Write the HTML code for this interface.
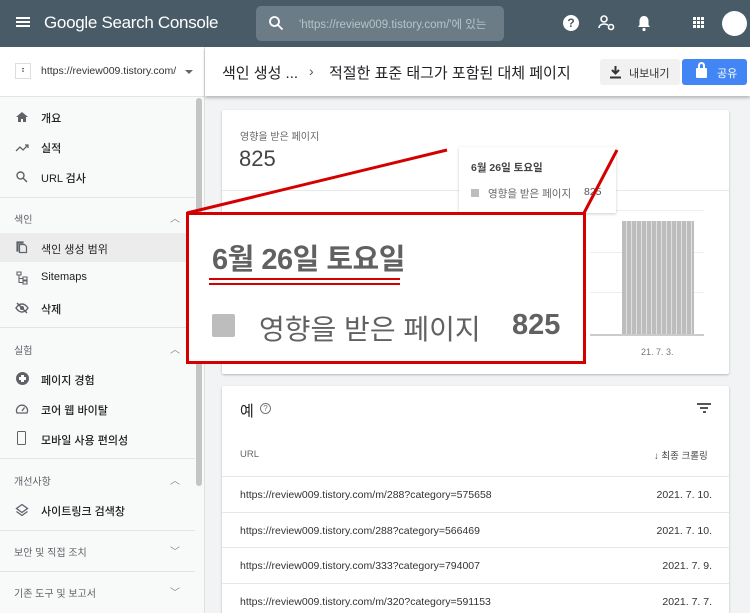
<!DOCTYPE html>
<html style="width:750px;height:613px;overflow:hidden"><head><meta charset="utf-8"><style>
*{margin:0;padding:0;box-sizing:border-box}
body{width:750px;height:613px;overflow:hidden;position:relative;background:#f1f3f4;font-family:"Liberation Sans","Noto Sans CJK KR",sans-serif;color:#202124}
.abs{position:absolute}
.top{left:0;top:0;width:750px;height:47px;background:#485b67}
.side{left:0;top:47px;width:205px;height:566px;background:#f8f9f9;border-right:1px solid #e0e0e0}
.item{position:absolute;left:41px;font-size:11px;color:#202124;font-weight:500}
.sec{position:absolute;left:14px;font-size:10px;color:#5f6368}
.chev{position:absolute;left:170px;font-size:10px;color:#888}
.div{position:absolute;left:0;width:195px;height:1px;background:#e3e3e3}
.ic{position:absolute;left:15px;width:14px;height:14px}
.card{background:#fff;box-shadow:0 1px 2px rgba(0,0,0,.25);border-radius:2px}
.row{position:absolute;left:0;width:507px;height:36px;border-top:1px solid #e6e6e6;font-size:10.5px;color:#333;white-space:nowrap}
.row span{position:absolute;top:12px}
.row span.d{right:17px}
</style></head><body>
<div class="abs top">
 <div class="abs" style="left:16px;top:17px;width:14px;height:2px;background:#fff;box-shadow:0 4px 0 #fff,0 8px 0 #fff"></div>
 <div class="abs" style="left:44px;top:13px;font-size:17px;color:#fff;letter-spacing:-0.3px">Google Search Console</div>
 <div class="abs" style="left:256px;top:6px;width:248px;height:35px;background:#6b7c86;border-radius:5px"></div>
 <svg class="abs" style="left:268px;top:15px" width="16" height="16" viewBox="0 0 16 16"><circle cx="6.5" cy="6.5" r="4.5" stroke="#fff" stroke-width="1.8" fill="none"/><path d="M10 10l4.5 4.5" stroke="#fff" stroke-width="1.8"/></svg>
 <div class="abs" style="left:299px;top:16px;font-size:11.5px;color:#b8c3c9;white-space:nowrap">'https://review009.tistory.com/'에 있는</div>
 <div class="abs" style="left:563px;top:15px;width:16px;height:16px;border-radius:50%;background:#fff;color:#485b67;font-size:12px;font-weight:bold;text-align:center;line-height:16px">?</div>
 <svg class="abs" style="left:598px;top:14px" width="18" height="18" viewBox="0 0 18 18"><circle cx="6" cy="5" r="3" stroke="#fff" stroke-width="1.6" fill="none"/><path d="M1 14c0-3 3-4 5-4s3 .5 4 1" stroke="#fff" stroke-width="1.6" fill="none"/><circle cx="13" cy="13" r="2.5" stroke="#fff" stroke-width="1.6" fill="none"/></svg>
 <svg class="abs" style="left:636px;top:14px" width="16" height="18" viewBox="0 0 16 18"><path d="M8 2c-3 0-4.5 2.5-4.5 5v4L2 13h12l-1.5-2V7C12.5 4.5 11 2 8 2z" fill="#fff"/><circle cx="8" cy="15.5" r="1.6" fill="#fff"/></svg>
 <div class="abs" style="left:693px;top:17px;width:3px;height:3px;background:#fff;box-shadow:4px 0 #fff,8px 0 #fff,0 4px #fff,4px 4px #fff,8px 4px #fff,0 8px #fff,4px 8px #fff,8px 8px #fff"></div>
 <div class="abs" style="left:722px;top:11px;width:25px;height:25px;border-radius:50%;background:#fff"></div>
</div>
<div class="abs side">
 <div class="abs" style="left:0;top:0;width:204px;height:50px;background:#fff;border-bottom:1px solid #e3e3e3"></div>
 <div class="abs" style="left:15px;top:16px;width:16px;height:16px;border:1px solid #ddd;background:#fff;font-size:9px;text-align:center;line-height:12px;font-weight:bold">꞉</div>
 <div class="abs" style="left:41px;top:18px;font-size:10.5px;color:#333">https://review009.tistory.com/</div>
 <div class="abs" style="left:185px;top:23px;border:4px solid transparent;border-top:4px solid #666"></div>
 <div class="abs" style="left:196px;top:51px;width:6px;height:388px;background:#c4c4c4;border-radius:3px"></div>
 <svg class="ic" style="top:63px" viewBox="0 0 14 14"><path d="M7 2L1 7h2v5h3V9h2v3h3V7h2z" fill="#5f6368"/></svg>
 <div class="item" style="top:63px">개요</div>
 <svg class="ic" style="top:94px" viewBox="0 0 14 14"><path d="M1 10l4-4 3 3 5-5M10 4h3v3" stroke="#5f6368" stroke-width="1.3" fill="none"/></svg>
 <div class="item" style="top:93px">실적</div>
 <svg class="ic" style="top:123px" viewBox="0 0 14 14"><circle cx="5.5" cy="5.5" r="3.5" stroke="#5f6368" stroke-width="1.4" fill="none"/><path d="M8 8l4 4" stroke="#5f6368" stroke-width="1.5"/></svg>
 <div class="item" style="top:123px">URL 검사</div>
 <div class="div" style="top:150px"></div>
 <div class="sec" style="top:164px">색인</div><div class="chev" style="top:163px">︿</div>
 <div class="abs" style="left:0;top:186px;width:186px;height:29px;background:#ececec"></div>
 <svg class="ic" style="top:193px" viewBox="0 0 14 14"><path d="M2 2h6v1H3v8H2zM4.5 4.5h5l2 2v6h-7z" stroke="#5f6368" stroke-width="1.2" fill="none"/></svg>
 <div class="item" style="top:194px;font-weight:400">색인 생성 범위</div>
 <svg class="ic" style="top:224px" viewBox="0 0 14 14"><path d="M2 1h4v3H2zM8 6h4v3H8zM8 10h4v3H8zM4 4v7.5h4M4 7.5h4" stroke="#5f6368" stroke-width="1.1" fill="none"/></svg>
 <div class="item" style="top:224px">Sitemaps</div>
 <svg class="ic" style="top:254px" viewBox="0 0 14 14"><path d="M1 7c2-3 4-4 6-4s4 1 6 4c-2 3-4 4-6 4S3 10 1 7z" stroke="#5f6368" stroke-width="1.4" fill="none"/><circle cx="7" cy="7" r="2" fill="#5f6368"/><path d="M2 2l10 10" stroke="#5f6368" stroke-width="1.5"/></svg>
 <div class="item" style="top:254px">삭제</div>
 <div class="div" style="top:280px"></div>
 <div class="sec" style="top:295px">실험</div><div class="chev" style="top:294px">︿</div>
 <div class="abs" style="left:16px;top:325px;width:13px;height:13px;border-radius:50%;background:#5f6368"></div><div class="abs" style="left:21px;top:328px;width:3px;height:7px;background:#fff"></div><div class="abs" style="left:19px;top:330px;width:7px;height:3px;background:#fff"></div>
 <div class="item" style="top:325px">페이지 경험</div>
 <svg class="ic" style="top:355px" viewBox="0 0 14 14"><path d="M2 11a5.5 5.5 0 1 1 10 0z" stroke="#5f6368" stroke-width="1.3" fill="none"/><path d="M7 9l2.5-3.5" stroke="#5f6368" stroke-width="1.3"/></svg>
 <div class="item" style="top:355px">코어 웹 바이탈</div>
 <div class="abs" style="left:17px;top:384px;width:9px;height:14px;border:1.5px solid #5f6368;border-radius:1.5px"></div>
 <div class="item" style="top:385px">모바일 사용 편의성</div>
 <div class="div" style="top:411px"></div>
 <div class="sec" style="top:426px">개선사항</div><div class="chev" style="top:425px">︿</div>
 <svg class="ic" style="top:456px" viewBox="0 0 14 14"><path d="M7 1.5l5.5 4-5.5 4-5.5-4z" stroke="#5f6368" stroke-width="1.3" fill="none"/><path d="M1.5 8.5l5.5 4 5.5-4" stroke="#5f6368" stroke-width="1.3" fill="none"/></svg>
 <div class="item" style="top:456px">사이트링크 검색창</div>
 <div class="div" style="top:483px"></div>
 <div class="sec" style="top:497px">보안 및 직접 조치</div><div class="chev" style="top:496px">﹀</div>
 <div class="div" style="top:524px"></div>
 <div class="sec" style="top:538px">기존 도구 및 보고서</div><div class="chev" style="top:537px">﹀</div>
</div>
<div class="abs" style="left:205px;top:47px;width:545px;height:49px;background:#fff;box-shadow:0 2px 3px rgba(0,0,0,.25)">
 <div class="abs" style="left:17px;top:15px;font-size:15px">색인 생성 ...</div>
 <div class="abs" style="left:104px;top:16px;font-size:14px;color:#555">›</div>
 <div class="abs" style="left:124px;top:15px;font-size:15px">적절한 표준 태그가 포함된 대체 페이지</div>
 <div class="abs" style="left:395px;top:12px;width:80px;height:26px;background:#f1f1f1;border-radius:3px"></div>
 <svg class="abs" style="left:404px;top:18px" width="13" height="14" viewBox="0 0 13 14"><path d="M6.5 1v7M3 5l3.5 3.5L10 5" stroke="#333" stroke-width="2" fill="none"/><path d="M1 12.5h11" stroke="#333" stroke-width="2"/></svg>
 <div class="abs" style="left:424px;top:18px;font-size:11px;color:#333">내보내기</div>
 <div class="abs" style="left:477px;top:12px;width:65px;height:26px;background:#4285f4;border-radius:3px"></div>
 <div class="abs" style="left:491px;top:21px;width:11px;height:10px;background:#fff;border-radius:1px"></div>
 <div class="abs" style="left:493px;top:15px;width:7px;height:8px;border:2px solid #fff;border-bottom:none;border-radius:4px 4px 0 0"></div>
 <div class="abs" style="left:512px;top:18px;font-size:11px;color:#fff">공유</div>
</div>
<div class="abs card" style="left:222px;top:110px;width:507px;height:264px">
 <div class="abs" style="left:18px;top:18px;font-size:10px;color:#666">영향을 받은 페이지</div>
 <div class="abs" style="left:17px;top:36px;font-size:22px;color:#444">825</div>
 <div class="abs" style="left:0;top:80px;width:507px;height:1px;background:#e8e8e8"></div>
 <div class="abs" style="left:368px;top:100px;width:114px;height:1px;background:#eee"></div>
 <div class="abs" style="left:368px;top:142px;width:114px;height:1px;background:#eee"></div>
 <div class="abs" style="left:368px;top:182px;width:114px;height:1px;background:#eee"></div>
 <div class="abs" style="left:368px;top:224px;width:114px;height:2px;background:#ccc"></div>
 <div class="abs" style="left:400px;top:111px;width:72px;height:113px;background:repeating-linear-gradient(90deg,#bdbdbd 0 4px,#e0e0e0 4px 5px)"></div>
 <div class="abs" style="left:343px;top:237px;font-size:9px;color:#777">7.</div>
 <div class="abs" style="left:419px;top:237px;font-size:9px;color:#777">21. 7. 3.</div>
 <div class="abs" style="left:237px;top:37px;width:157px;height:66px;background:#fff;box-shadow:0 1px 3px rgba(0,0,0,.2)">
  <div class="abs" style="left:12px;top:13px;font-size:10.5px;font-weight:bold;color:#444">6월 26일 토요일</div>
  <div class="abs" style="left:12px;top:42px;width:8px;height:8px;background:#bdbdbd"></div>
  <div class="abs" style="left:29px;top:39px;font-size:10.5px;color:#666">영향을 받은 페이지</div>
  <div class="abs" style="left:125px;top:39px;font-size:10.5px;color:#555">825</div>
 </div>
</div>
<svg class="abs" style="left:0;top:0" width="750" height="613"><path d="M187 213L447 150M584 213L617 150" stroke="#d40000" stroke-width="3"/></svg>
<div class="abs" style="left:186px;top:212px;width:400px;height:152px;background:#fff;border:3px solid #d40000;white-space:nowrap">
 <div class="abs" style="left:23px;top:21px;font-size:29px;font-weight:bold;color:#616161;letter-spacing:-0.5px">6월 26일 토요일</div>
 <div class="abs" style="left:20px;top:63px;width:191px;height:2px;background:#d40000"></div>
 <div class="abs" style="left:20px;top:68px;width:191px;height:2px;background:#d40000"></div>
 <div class="abs" style="left:23px;top:99px;width:23px;height:23px;background:#bdbdbd;border-radius:2px"></div>
 <div class="abs" style="left:70px;top:93px;font-size:28px;color:#616161">영향을 받은 페이지</div>
 <div class="abs" style="left:323px;top:94px;font-size:29px;font-weight:bold;color:#616161">825</div>
</div>
<div class="abs card" style="left:222px;top:386px;width:507px;height:240px">
 <div class="abs" style="left:18px;top:14px;font-size:15px">예</div>
 <div class="abs" style="left:38px;top:17px;width:11px;height:11px;border:1px solid #777;border-radius:50%;font-size:8px;color:#777;text-align:center;line-height:9px">?</div>
 <div class="abs" style="left:475px;top:17px;width:14px;height:2px;background:#555"></div>
 <div class="abs" style="left:478px;top:21px;width:8px;height:2px;background:#555"></div>
 <div class="abs" style="left:481px;top:25px;width:3px;height:2px;background:#555"></div>
 <div class="abs" style="left:18px;top:63px;font-size:9.5px;color:#666">URL</div>
 <div class="abs" style="left:432px;top:62px;font-size:9.5px;color:#444;white-space:nowrap">↓ 최종 크롤링</div>
 <div class="row" style="top:90px"><span style="left:18px">https://review009.tistory.com/m/288?category=575658</span><span class="d">2021. 7. 10.</span></div>
 <div class="row" style="top:126px"><span style="left:18px">https://review009.tistory.com/288?category=566469</span><span class="d">2021. 7. 10.</span></div>
 <div class="row" style="top:161px"><span style="left:18px">https://review009.tistory.com/333?category=794007</span><span class="d">2021. 7. 9.</span></div>
 <div class="row" style="top:197px"><span style="left:18px">https://review009.tistory.com/m/320?category=591153</span><span class="d">2021. 7. 7.</span></div>
</div>
</body></html>
